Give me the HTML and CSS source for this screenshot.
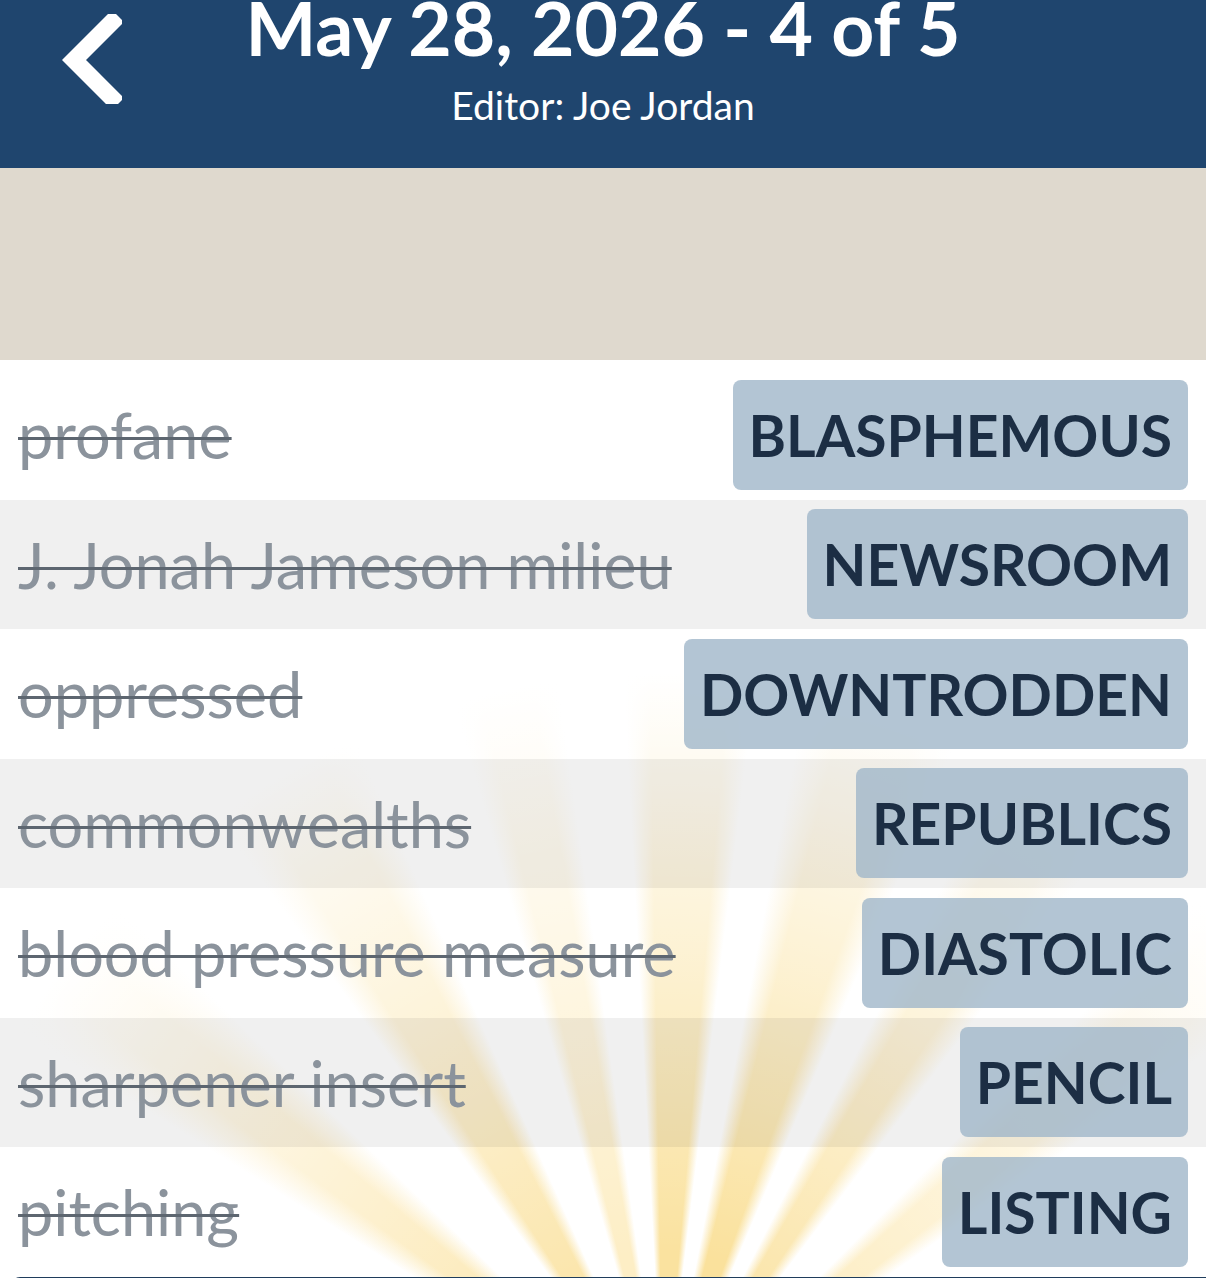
FILE: index.html
```html
<!DOCTYPE html>
<html lang="en">
<head>
    <meta charset="UTF-8">
    <meta name="viewport" content="width=device-width, initial-scale=1.0">
    <title>May 28, 2026 - 4 of 5</title>
    <link rel="stylesheet" href="styles.css">
</head>
<body>
    <header class="top-bar">
        <button class="back-button" aria-label="Back">
            <svg width="60" height="90" viewBox="0 0 60 90">
                <path d="M50 8 L12 46 L50 84" fill="none" stroke="#fff" stroke-width="17" stroke-linecap="square" stroke-linejoin="miter"/>
            </svg>
        </button>
        <div class="top-titles">
            <h1 class="puzzle-title">May 28, 2026 - 4 of 5</h1>
            <div class="puzzle-editor">Editor: Joe Jordan</div>
        </div>
    </header>

    <div class="board"></div>

    <div class="answers">
        <div class="answer-row">
            <span class="clue">profane</span>
            <span class="word">BLASPHEMOUS</span>
        </div>
        <div class="answer-row">
            <span class="clue">J. Jonah Jameson milieu</span>
            <span class="word">NEWSROOM</span>
        </div>
        <div class="answer-row">
            <span class="clue">oppressed</span>
            <span class="word">DOWNTRODDEN</span>
        </div>
        <div class="answer-row">
            <span class="clue">commonwealths</span>
            <span class="word">REPUBLICS</span>
        </div>
        <div class="answer-row">
            <span class="clue">blood pressure measure</span>
            <span class="word">DIASTOLIC</span>
        </div>
        <div class="answer-row">
            <span class="clue">sharpener insert</span>
            <span class="word">PENCIL</span>
        </div>
        <div class="answer-row">
            <span class="clue">pitching</span>
            <span class="word">LISTING</span>
        </div>
        <div class="bottom-bar"></div>
    </div>
</body>
</html>
```

FILE: styles.css
```css
body {
    margin: 0;
    font-family: Lato, "Open Sans", sans-serif;
    background-color: #fff;
    overflow: hidden;
}

.top-bar {
    height: 168px;
    background-color: #1f456e;
    display: flex;
    align-items: flex-start;
    position: relative;
}

.back-button {
    position: absolute;
    left: 62px;
    top: 14px;
    background: none;
    border: none;
    padding: 0;
    cursor: pointer;
}

.top-titles {
    flex: 1;
    text-align: center;
    color: #fff;
}

.puzzle-title {
    margin: -13px 0 0;
    font-size: 75px;
    font-weight: 700;
    line-height: 80px;
}

.puzzle-editor {
    margin-top: 18px;
    font-size: 39px;
    line-height: 40px;
}

.board {
    height: 192px;
    background-color: #dfd9ce;
}

/* sunburst rays rising from below the list, fading out with distance */
.answers {
    padding-top: 10px;
    background-image:
        radial-gradient(circle at 55% 115.5%, rgba(255, 255, 255, 0) 0, rgba(255, 255, 255, 0) 180px, rgba(255, 255, 255, 0.55) 480px, #fff 760px),
        conic-gradient(from 270deg at 55% 115.5%,
            #fff 0deg 32deg, #fce9b6 36deg 40deg, #fff 44deg,
            #fff 54deg, #fbe6ad 57deg 63deg, #fff 66deg,
            #fff 74deg, #fdeec5 76deg 80deg, #fff 82deg,
            #fff 87deg, #fae29f 89deg 95deg, #fff 97deg,
            #fff 101deg, #fae19c 104deg 110deg, #fff 113deg,
            #fff 117deg, #fbe6ad 120deg 124deg, #fff 127deg,
            #fff 135deg, #fdedc2 138deg 142deg, #fff 145deg, #fff 360deg);
}

.answer-row {
    height: 129.5px;
    display: flex;
    align-items: center;
    justify-content: space-between;
    padding: 0 18px;
}

.answer-row:nth-child(even) {
    background-color: rgba(0, 0, 0, 0.058);
}

.clue {
    font-size: 63px;
    color: #8b939c;
    text-decoration: line-through;
    text-decoration-color: #5d6670;
    text-decoration-thickness: 3px;
    white-space: nowrap;
}

.word {
    height: 110px;
    display: flex;
    align-items: center;
    padding: 0 16px;
    background-color: rgba(160, 182, 201, 0.8);
    border-radius: 8px;
    color: #1c2e44;
    font-size: 57px;
    font-weight: 700;
    white-space: nowrap;
}

.bottom-bar {
    height: 12px;
    margin: 0 0 0 12px;
    background-color: #1f3d5c;
    border-radius: 8px 0 0 0;
}
```
